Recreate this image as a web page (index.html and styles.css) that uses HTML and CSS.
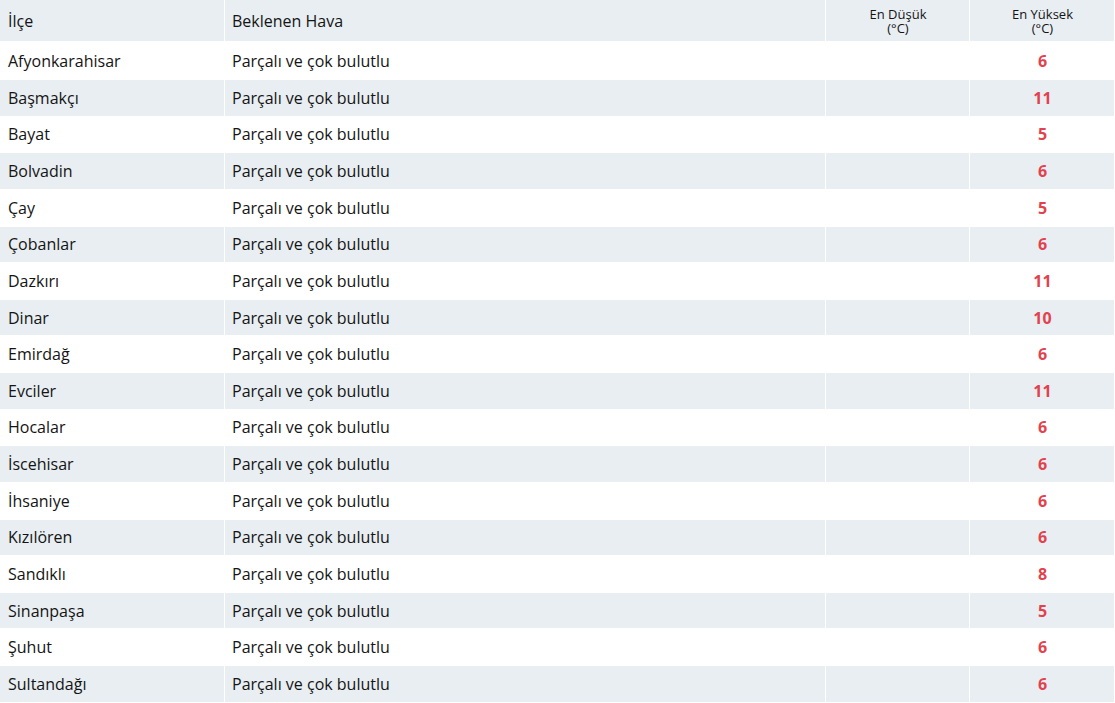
FILE: index.html
```html
<!DOCTYPE html>
<html lang="tr">
<head>
<meta charset="utf-8">
<title>Hava Durumu</title>
<link rel="stylesheet" href="styles.css">
</head>
<body>
<table class="wx">
  <colgroup>
    <col class="c-ilce">
    <col class="c-hava">
    <col class="c-min">
    <col class="c-max">
  </colgroup>
  <thead>
    <tr>
      <th class="h-left">İlçe</th>
      <th class="h-left">Beklenen Hava</th>
      <th class="h-small">En Düşük<br>(°C)</th>
      <th class="h-small">En Yüksek<br>(°C)</th>
    </tr>
  </thead>
  <tbody>
    <tr><td>Afyonkarahisar</td><td>Parçalı ve çok bulutlu</td><td></td><td class="max">6</td></tr>
    <tr><td>Başmakçı</td><td>Parçalı ve çok bulutlu</td><td></td><td class="max">11</td></tr>
    <tr><td>Bayat</td><td>Parçalı ve çok bulutlu</td><td></td><td class="max">5</td></tr>
    <tr><td>Bolvadin</td><td>Parçalı ve çok bulutlu</td><td></td><td class="max">6</td></tr>
    <tr><td>Çay</td><td>Parçalı ve çok bulutlu</td><td></td><td class="max">5</td></tr>
    <tr><td>Çobanlar</td><td>Parçalı ve çok bulutlu</td><td></td><td class="max">6</td></tr>
    <tr><td>Dazkırı</td><td>Parçalı ve çok bulutlu</td><td></td><td class="max">11</td></tr>
    <tr><td>Dinar</td><td>Parçalı ve çok bulutlu</td><td></td><td class="max">10</td></tr>
    <tr><td>Emirdağ</td><td>Parçalı ve çok bulutlu</td><td></td><td class="max">6</td></tr>
    <tr><td>Evciler</td><td>Parçalı ve çok bulutlu</td><td></td><td class="max">11</td></tr>
    <tr><td>Hocalar</td><td>Parçalı ve çok bulutlu</td><td></td><td class="max">6</td></tr>
    <tr><td>İscehisar</td><td>Parçalı ve çok bulutlu</td><td></td><td class="max">6</td></tr>
    <tr><td>İhsaniye</td><td>Parçalı ve çok bulutlu</td><td></td><td class="max">6</td></tr>
    <tr><td>Kızılören</td><td>Parçalı ve çok bulutlu</td><td></td><td class="max">6</td></tr>
    <tr><td>Sandıklı</td><td>Parçalı ve çok bulutlu</td><td></td><td class="max">8</td></tr>
    <tr><td>Sinanpaşa</td><td>Parçalı ve çok bulutlu</td><td></td><td class="max">5</td></tr>
    <tr><td>Şuhut</td><td>Parçalı ve çok bulutlu</td><td></td><td class="max">6</td></tr>
    <tr><td>Sultandağı</td><td>Parçalı ve çok bulutlu</td><td></td><td class="max">6</td></tr>
  </tbody>
</table>
</body>
</html>
```

FILE: styles.css
```css
html, body {
  margin: 0;
  padding: 0;
  background: #ffffff;
}

body {
  font-family: "Open Sans", "Noto Sans", sans-serif;
  color: #141414;
}

.wx {
  width: 1115px;
  border-collapse: separate;
  border-spacing: 0;
  table-layout: fixed;
}

.c-ilce { width: 225px; }
.c-hava { width: 601px; }
.c-min  { width: 144px; }
.c-max  { width: 145px; }

.wx th,
.wx td {
  border-right: 1px solid #ffffff;
  border-bottom: 1px solid #ffffff;
  padding: 0 6px 0 7px;
  vertical-align: middle;
  box-sizing: border-box;
}

.wx th:first-child,
.wx td:first-child {
  padding-left: 8px;
}

.wx thead th {
  background: #e8eef2;
  height: 43.375px;
  border-bottom-width: 2px;
  font-weight: normal;
}

.h-left {
  text-align: left;
  font-size: 16px;
}

.h-small {
  text-align: center;
  font-size: 13px;
  line-height: 14px;
  padding-bottom: 4px;
}

.wx tbody td {
  height: 36.625px;
  font-size: 16px;
  line-height: 20px;
}

.wx tbody tr:nth-child(even) td {
  background: #e8eef2;
}

.wx td.max {
  text-align: center;
  font-weight: bold;
  color: #e2414d;
  padding: 0 0 0 1px;
}
```
